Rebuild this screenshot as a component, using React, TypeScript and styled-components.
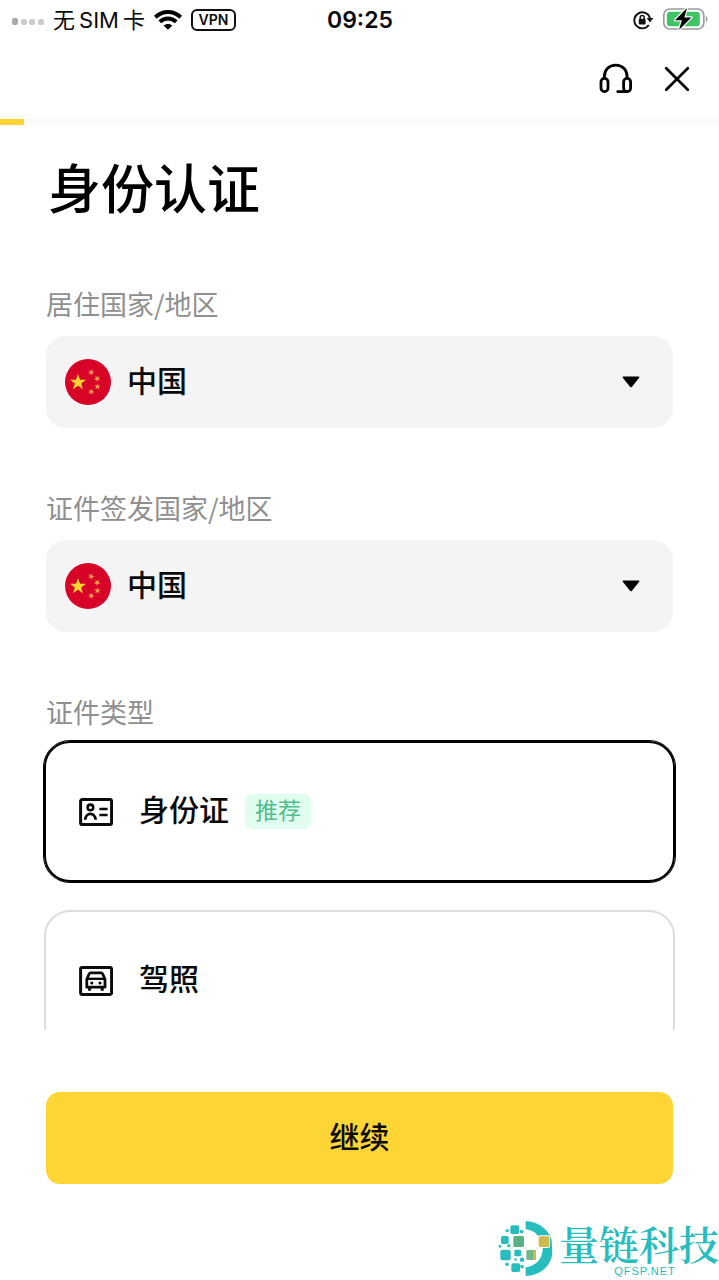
import React, { useState } from "react";
import styled, { createGlobalStyle, css } from "styled-components";

const GlobalStyle = createGlobalStyle`
  *, *::before, *::after { box-sizing: border-box; }
  body {
    margin: 0;
    background: #ffffff;
    color: #0b0b0b;
    font-family: Inter, "Noto Sans CJK SC", sans-serif;
  }
  button, select { font-family: inherit; color: inherit; }
`;

const Screen = styled.div`
  position: relative;
  display: flex;
  flex-direction: column;
  height: 100vh;
  background: #ffffff;
`;

const StatusBar = styled.div`
  display: grid;
  grid-template-columns: 1fr auto 1fr;
  align-items: center;
  flex: none;
  height: 40px;
  padding: 0 11px 0 12px;
`;

const StatusGroup = styled.div<{ $end?: boolean }>`
  display: flex;
  align-items: center;
  gap: 9px;
  justify-content: ${(p) => (p.$end ? "flex-end" : "flex-start")};
`;

const Carrier = styled.span`
  display: flex;
  gap: 4px;
  font-size: 22px;
  line-height: 28px;
`;

const Clock = styled.time`
  font-size: 23px;
  line-height: 28px;
  font-weight: 600;
`;

const VpnTag = styled.span`
  display: flex;
  align-items: center;
  justify-content: center;
  width: 45px;
  height: 22px;
  border: 2px solid #111111;
  border-radius: 6px;
  font-size: 14px;
  line-height: 18px;
  font-weight: 600;
`;

const Header = styled.header`
  display: flex;
  align-items: center;
  justify-content: flex-end;
  gap: 31px;
  flex: none;
  height: 79px;
  padding: 0 29px 2px;
`;

const IconButton = styled.button`
  display: flex;
  padding: 0;
  border: 0;
  background: none;
  cursor: pointer;
`;

const ProgressTrack = styled.div`
  flex: none;
  height: 6px;
  background: #fafafa;
`;

const ProgressFill = styled.div`
  height: 100%;
  background: #fcd535;
`;

const Content = styled.main`
  flex: 1 1 0;
  min-height: 0;
  overflow-y: auto;
  scrollbar-width: none;
  padding: 33px 46px 40px;
`;

const Title = styled.h1`
  margin: 0 0 65px;
  padding-left: 2px;
  font-size: 53px;
  line-height: 64px;
  font-weight: 500;
  color: #000000;
`;

const labelText = css`
  display: block;
  padding: 0;
  font-family: "Noto Sans CJK SC", sans-serif;
  font-size: 27px;
  line-height: 34px;
  color: #8f8f8f;
`;

const Field = styled.div`
  margin-bottom: 63px;
`;

const FieldLabel = styled.label`
  ${labelText}
  margin-bottom: 15px;
`;

const SelectBox = styled.div`
  display: flex;
  align-items: center;
  gap: 16px;
  height: 92px;
  padding: 0 33px 0 19px;
  border-radius: 20px;
  background: #f4f4f4;
`;

const Select = styled.select`
  appearance: none;
  flex: 1;
  min-width: 0;
  height: 100%;
  padding: 0 0 3px;
  border: 0;
  outline: 0;
  background: transparent;
  font-size: 30px;
  font-weight: 500;
`;

const TypeGroup = styled.fieldset`
  min-width: 0;
  margin: 0;
  padding: 0;
  border: 0;
`;

const TypeLegend = styled.legend`
  ${labelText}
`;

const CardList = styled.div`
  display: flex;
  flex-direction: column;
  gap: 28px;
  margin: 12px -2px 0;
`;

const Card = styled.label<{ $selected: boolean }>`
  display: flex;
  align-items: center;
  height: 141px;
  padding: 0 33px;
  border: 2px solid ${(p) => (p.$selected ? "#000000" : "#dcdcdc")};
  border-radius: 26px;
  box-shadow: ${(p) => (p.$selected ? "0 0 0 1px #000000" : "none")};
  cursor: pointer;
`;

const HiddenRadio = styled.input`
  appearance: none;
  width: 0;
  height: 0;
  margin: 0;
`;

const CardName = styled.span`
  margin-left: 26px;
  padding-bottom: 3px;
  font-size: 30px;
  line-height: 40px;
  font-weight: 500;
`;

const Badge = styled.span`
  margin-left: 16px;
  padding: 0 10px;
  border-radius: 7px;
  background: #e2fdf0;
  color: #4dc08c;
  font-size: 23px;
  line-height: 35px;
`;

const Footer = styled.footer`
  flex: none;
  padding: 62px 46px 96px;
`;

const PrimaryButton = styled.button`
  display: block;
  width: 100%;
  height: 92px;
  padding: 0 0 6px;
  border: 0;
  border-radius: 14px;
  background: #fdd535;
  font-size: 30px;
  font-weight: 500;
  cursor: pointer;
`;

const Watermark = styled.div`
  position: absolute;
  right: 0;
  bottom: 3px;
  display: flex;
  align-items: center;
  gap: 5px;
  color: #27bdbe;
  pointer-events: none;
`;

const BrandText = styled.div`
  display: flex;
  flex-direction: column;
  align-items: center;
`;

const BrandName = styled.span`
  font-family: "Noto Serif CJK SC", "Noto Sans CJK SC", serif;
  font-size: 40px;
  line-height: 44px;
  font-weight: 600;
`;

const BrandSite = styled.span`
  font-family: "Liberation Sans", sans-serif;
  font-size: 11px;
  line-height: 12px;
  letter-spacing: 1px;
  margin-left: 12px;
`;

const SignalIcon = () => (
  <svg width="32" height="9" viewBox="0 0 32 9" aria-hidden="true">
    <rect x="0" y="2" width="6" height="7" rx="2" fill="#a9a9a9" />
    <rect x="9" y="3" width="6" height="6" rx="2" fill="#cccccc" />
    <rect x="17" y="3" width="6" height="6" rx="2" fill="#cccccc" />
    <rect x="26" y="3" width="6" height="6" rx="2" fill="#cccccc" />
  </svg>
);

const WifiIcon = () => (
  <svg width="28" height="22" viewBox="0 0 28 22" aria-hidden="true">
    <g fill="none" stroke="#000" strokeWidth="4">
      <path d="M1.3 8.2C8.5 1.2 19.5 1.2 26.7 8.2" />
      <path d="M5.8 12.9C10.6 8.4 17.4 8.4 22.2 12.9" />
    </g>
    <path d="M14 20.8L9.6 16.6C12 14.4 16 14.4 18.4 16.6Z" fill="#000" />
  </svg>
);

const RotationLockIcon = () => (
  <svg width="20" height="20" viewBox="0 0 20 20" aria-hidden="true">
    <path d="M15.8 15A8 8 0 1 1 17 8.2" fill="none" stroke="#111" strokeWidth="1.9" />
    <path d="M13.6 8H20.2L17 12.6Z" fill="#111" />
    <rect x="5.8" y="8.8" width="6.8" height="5.6" rx="1" fill="#111" />
    <path d="M7.2 9V7.6a2 2 0 0 1 4 0V9" fill="none" stroke="#111" strokeWidth="1.5" />
  </svg>
);

const BatteryIcon = () => (
  <svg width="46" height="24" viewBox="0 0 46 24" aria-hidden="true">
    <rect x="1.8" y="1" width="40" height="20" rx="6" fill="none" stroke="#9b9b9b" strokeWidth="1.7" />
    <rect x="4.8" y="3.8" width="33" height="14.4" rx="3.5" fill="#3fc463" />
    <path d="M43.8 7.8C46 8.8 46 13.2 43.8 14.2Z" fill="#9b9b9b" />
    <path
      d="M25 0L13 12.2H19.8L17 22L29.4 9.4H22.4Z"
      fill="#000"
      stroke="#fff"
      strokeWidth="2.4"
      strokeLinejoin="round"
      paintOrder="stroke"
    />
  </svg>
);

const HeadsetIcon = () => (
  <svg width="34" height="34" viewBox="0 0 34 34" aria-hidden="true">
    <g fill="none" stroke="#000" strokeWidth="2.8" strokeLinecap="round" strokeLinejoin="round">
      <path d="M5.4 16V14.6C5.4 7.8 10 3.2 16.7 3.2S28.1 7.8 28.1 14.6V16" />
      <rect x="2" y="16.4" width="7" height="13.2" rx="3.4" />
      <rect x="24.6" y="16.4" width="7" height="13.2" rx="3.4" />
      <path d="M18.8 29.6H28.2" />
    </g>
  </svg>
);

const CloseIcon = () => (
  <svg width="26" height="26" viewBox="0 0 26 26" aria-hidden="true">
    <path d="M2.2 2.2L23.8 23.8M23.8 2.2L2.2 23.8" stroke="#000" strokeWidth="2.7" strokeLinecap="round" />
  </svg>
);

const STAR = "M0 -10L2.4 -3.2L9.5 -3.1L3.8 1.2L5.9 8.1L0 4L-5.9 8.1L-3.8 1.2L-9.5 -3.1L-2.4 -3.2Z";

const ChinaFlag = () => (
  <svg width="46" height="46" viewBox="0 0 46 46" aria-hidden="true">
    <circle cx="23" cy="23" r="23" fill="#d80427" />
    <path d={STAR} fill="#fbd433" transform="translate(13 23.4) scale(0.84)" />
    <g fill="#f0a050">
      <path d={STAR} transform="translate(26.2 13.4) rotate(20) scale(0.34)" />
      <path d={STAR} transform="translate(32.2 19.6) rotate(40) scale(0.34)" />
      <path d={STAR} transform="translate(32.4 27.6) scale(0.34)" />
      <path d={STAR} transform="translate(26.2 32.8) rotate(20) scale(0.34)" />
    </g>
  </svg>
);

const CaretIcon = () => (
  <svg width="18" height="12" viewBox="0 0 18 12" aria-hidden="true">
    <path d="M1.2 0.6H16.8Q17.8 0.8 17.2 1.8L10 10.7Q9 11.7 8 10.7L0.8 1.8Q0.2 0.8 1.2 0.6Z" fill="#000" />
  </svg>
);

const IdCardIcon = () => (
  <svg width="34" height="30" viewBox="0 0 34 30" aria-hidden="true">
    <g fill="none" stroke="#0b0b0b" strokeWidth="3">
      <rect x="1.6" y="2.6" width="31" height="25" rx="1.6" />
      <circle cx="11.4" cy="10.4" r="2.8" strokeWidth="2.6" />
      <path d="M6.2 22.8C6.6 15 16.2 15 16.6 22.8" strokeWidth="2.8" />
      <path d="M20.4 12H28.6M20.4 18H28.6" strokeWidth="2.6" />
    </g>
  </svg>
);

const LicenceIcon = () => (
  <svg width="34" height="30" viewBox="0 0 34 30" aria-hidden="true">
    <g fill="none" stroke="#0b0b0b" strokeWidth="3">
      <rect x="1.6" y="1.6" width="31" height="26.8" rx="1.6" />
      <path d="M7.8 13.2L10.2 7.8Q10.6 6.8 11.8 6.8H22Q23.2 6.8 23.6 7.8L26 13.2V21.2H7.8Z" strokeWidth="2.8" strokeLinejoin="round" />
      <path d="M8 12.8H25.8" strokeWidth="2.4" />
      <path d="M10.6 21V24.8M23.2 21V24.8" strokeWidth="3" />
    </g>
    <circle cx="12.8" cy="17" r="1.6" fill="#0b0b0b" />
    <circle cx="21" cy="17" r="1.6" fill="#0b0b0b" />
  </svg>
);

const BrandLogo = () => (
  <svg width="56" height="57" viewBox="27 45 168 171" aria-hidden="true">
    <path
      d="M110 48C154 50 180 78 188 106L190 146C184 184 154 211 110 213V187C136 184 156 168 160 142C163 134 161 126 156 120L150 98C144 84 128 75 110 73Z"
      fill="#27bdbe"
    />
    <g fill="#27bdbe">
      <rect x="64" y="61" width="26" height="26" rx="5" />
      <rect x="36" y="93" width="23" height="24" rx="5" />
      <rect x="34" y="134" width="31" height="32" rx="6" />
      <rect x="76" y="134" width="20" height="20" rx="4" />
      <rect x="67" y="175" width="26" height="26" rx="5" />
      <rect x="50" y="73" width="9" height="9" rx="3" />
      <rect x="93" y="75" width="10" height="10" rx="3" />
      <rect x="29" y="120" width="8" height="8" rx="3" />
      <rect x="55" y="118" width="9" height="9" rx="3" />
      <rect x="49" y="173" width="10" height="10" rx="3" />
      <rect x="93" y="158" width="12" height="12" rx="3" />
      <rect x="94" y="180" width="10" height="10" rx="3" />
      <rect x="76" y="160" width="7" height="7" rx="2" />
    </g>
    <path d="M56 138L74 124M103 124L114 136M140 136L150 124" stroke="#b9c3c0" strokeWidth="2" />
    <rect x="73" y="93" width="32" height="33" rx="5" fill="#58b183" />
    <rect x="146" y="91" width="37" height="38" rx="7" fill="#fff" />
    <rect x="149" y="94" width="32" height="32" rx="5" fill="#cfb94b" />
    <rect x="109" y="132" width="36" height="36" rx="6" fill="#fff" />
    <rect x="112" y="135" width="29" height="30" rx="4" fill="#6fb886" />
    <path d="M132 135H137Q141 135 141 139V161Q141 165 137 165H132Z" fill="#cfb94b" />
  </svg>
);

const COUNTRIES = ["中国"];

const CountryField = ({ id, label }: { id: string; label: string }) => (
  <Field>
    <FieldLabel htmlFor={id}>{label}</FieldLabel>
    <SelectBox>
      <ChinaFlag />
      <Select id={id}>
        {COUNTRIES.map((name) => (
          <option key={name}>{name}</option>
        ))}
      </Select>
      <CaretIcon />
    </SelectBox>
  </Field>
);

const DOCUMENTS = [
  { id: "identity", name: "身份证", tag: "推荐", icon: <IdCardIcon /> },
  { id: "licence", name: "驾照", tag: "", icon: <LicenceIcon /> },
];

export default function App() {
  const [selected, setSelected] = useState("identity");
  const progress = 3.4;

  return (
    <Screen lang="zh-CN">
      <GlobalStyle />
      <StatusBar>
        <StatusGroup>
          <SignalIcon />
          <Carrier>
            <span>无</span>
            <span>SIM</span>
            <span>卡</span>
          </Carrier>
          <WifiIcon />
          <VpnTag>VPN</VpnTag>
        </StatusGroup>
        <Clock>09:25</Clock>
        <StatusGroup $end>
          <RotationLockIcon />
          <BatteryIcon />
        </StatusGroup>
      </StatusBar>

      <Header>
        <IconButton type="button" aria-label="客服">
          <HeadsetIcon />
        </IconButton>
        <IconButton type="button" aria-label="关闭">
          <CloseIcon />
        </IconButton>
      </Header>

      <ProgressTrack role="progressbar" aria-valuenow={progress} aria-valuemin={0} aria-valuemax={100}>
        <ProgressFill style={{ width: `${progress}%` }} />
      </ProgressTrack>

      <Content>
        <Title>身份认证</Title>
        <CountryField id="residence" label="居住国家/地区" />
        <CountryField id="issuer" label="证件签发国家/地区" />
        <TypeGroup>
          <TypeLegend>证件类型</TypeLegend>
          <CardList>
            {DOCUMENTS.map((doc) => (
              <Card key={doc.id} $selected={selected === doc.id}>
                <HiddenRadio
                  type="radio"
                  name="document"
                  value={doc.id}
                  checked={selected === doc.id}
                  onChange={() => setSelected(doc.id)}
                />
                {doc.icon}
                <CardName>{doc.name}</CardName>
                {doc.tag && <Badge>{doc.tag}</Badge>}
              </Card>
            ))}
          </CardList>
        </TypeGroup>
      </Content>

      <Footer>
        <PrimaryButton type="button">继续</PrimaryButton>
      </Footer>

      <Watermark>
        <BrandLogo />
        <BrandText>
          <BrandName>量链科技</BrandName>
          <BrandSite>QFSP.NET</BrandSite>
        </BrandText>
      </Watermark>
    </Screen>
  );
}
